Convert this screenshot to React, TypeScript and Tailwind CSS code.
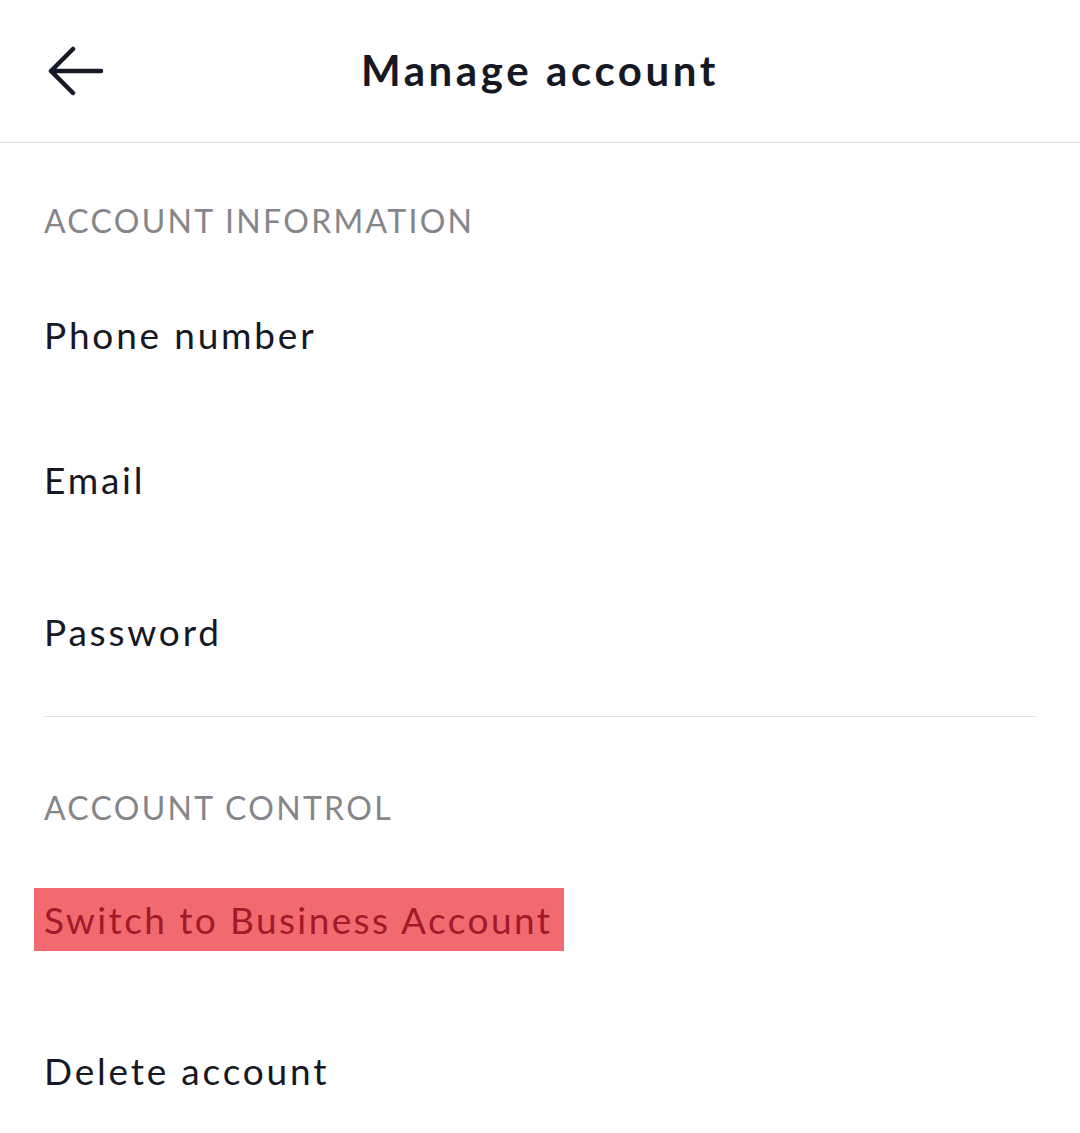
import React from 'react';

const BackArrow: React.FC = () => (
  <svg width="56" height="50" viewBox="0 0 56 50" fill="none">
    <path d="M53 25H4M25 3L3 25l22 22" stroke="#161823" strokeWidth="4.5" strokeLinecap="round" strokeLinejoin="round" />
  </svg>
);

const Row: React.FC<{ label: string; className?: string }> = ({ label, className }) => (
  <div className={`pl-[44px] text-[37px] leading-[40px] tracking-[2.8px] text-[#161823] ${className || ''}`}>{label}</div>
);

const App: React.FC = () => {
  return (
    <div className="w-[1080px] h-[1133px] bg-white overflow-hidden" style={{ fontFamily: 'Lato, "Open Sans", sans-serif' }}>
      <div className="relative h-[143px] border-b border-[#dcdcdc] flex items-center justify-center">
        <button className="absolute left-[48px] top-[46px]">
          <BackArrow />
        </button>
        <h1 className="text-[42px] font-bold text-[#161823] tracking-[3.6px] -mt-[2px]">Manage account</h1>
      </div>

      <div className="pl-[44px] pt-[61px] text-[32px] leading-[34px] tracking-[2.3px] text-[#86868a] uppercase">Account information</div>
      <Row label="Phone number" className="mt-[77px]" />
      <Row label="Email" className="mt-[105px]" />
      <Row label="Password" className="mt-[112px]" />

      <div className="mx-[44px] mt-[64px] h-px bg-[#e3e3e4]" />

      <div className="pl-[44px] pt-[74px] text-[32px] leading-[34px] tracking-[2.3px] text-[#86868a] uppercase">Account control</div>
      <div className="mt-[63px] ml-[34px] inline-flex items-center h-[63px] pl-[10px] pr-[12px] bg-[#f06a70] text-[37px] tracking-[2.4px] text-[#a11a2a]">
        Switch to Business Account
      </div>
      <Row label="Delete account" className="mt-[100px]" />
    </div>
  );
};

export default App;
